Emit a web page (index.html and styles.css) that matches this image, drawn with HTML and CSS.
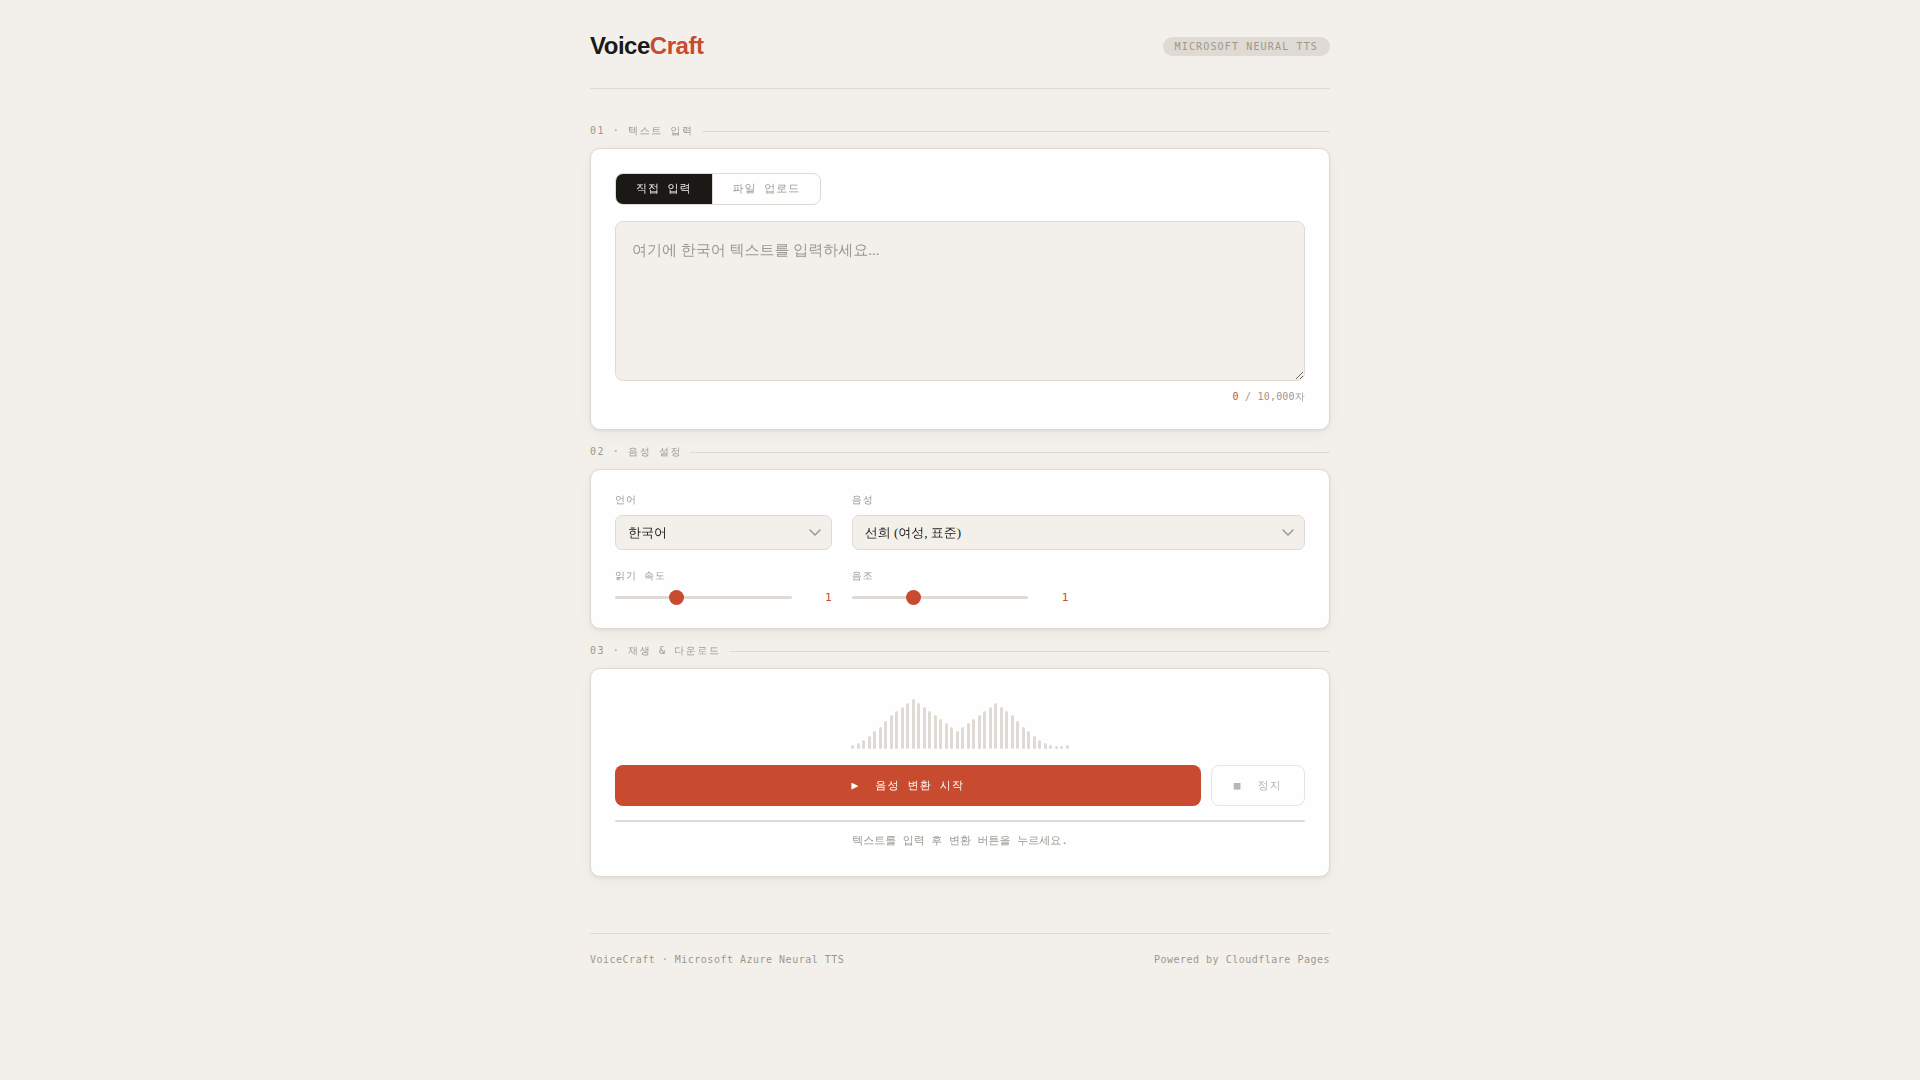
FILE: index.html
```html
<!DOCTYPE html>
<html lang="ko">
<head>
<meta charset="UTF-8">
<meta name="viewport" content="width=device-width, initial-scale=1">
<title>VoiceCraft</title>
<link rel="stylesheet" href="styles.css">
</head>
<body>
<div class="page">
  <header class="header">
    <h1 class="logo">Voice<span class="logo-accent">Craft</span></h1>
    <span class="badge">MICROSOFT NEURAL TTS</span>
  </header>

  <main>
    <h2 class="section-label">01 · 텍스트 입력</h2>
    <section class="card">
      <div class="tabs">
        <button type="button" class="tab tab-active">직접 입력</button>
        <button type="button" class="tab">파일 업로드</button>
      </div>
      <textarea class="text-input" aria-label="텍스트" placeholder="여기에 한국어 텍스트를 입력하세요..."></textarea>
      <p class="counter"><span class="counter-now">0</span> / 10,000자</p>
    </section>

    <h2 class="section-label">02 · 음성 설정</h2>
    <section class="card settings">
      <div class="field">
        <label class="field-label" for="lang">언어</label>
        <div class="select-wrap">
          <select class="select" id="lang"><option>한국어</option></select>
          <svg class="chevron" width="12" height="8" viewBox="0 0 12 8" aria-hidden="true"><path d="M1 1l5 5 5-5"/></svg>
        </div>
      </div>
      <div class="field field-wide">
        <label class="field-label" for="voice">음성</label>
        <div class="select-wrap">
          <select class="select" id="voice"><option>선희 (여성, 표준)</option></select>
          <svg class="chevron" width="12" height="8" viewBox="0 0 12 8" aria-hidden="true"><path d="M1 1l5 5 5-5"/></svg>
        </div>
      </div>
      <div class="field">
        <label class="field-label" for="rate">읽기 속도</label>
        <div class="range-row">
          <input class="range" type="range" id="rate" min="0.5" max="2" step="0.1" value="1">
          <output class="range-value" for="rate">1</output>
        </div>
      </div>
      <div class="field">
        <label class="field-label" for="pitch">음조</label>
        <div class="range-row">
          <input class="range" type="range" id="pitch" min="0.5" max="2" step="0.1" value="1">
          <output class="range-value" for="pitch">1</output>
        </div>
      </div>
    </section>

    <h2 class="section-label">03 · 재생 &amp; 다운로드</h2>
    <section class="card">
      <div class="wave" aria-hidden="true">
        <i style="height:4px"></i><i style="height:6px"></i><i style="height:9px"></i><i style="height:13px"></i><i style="height:18px"></i><i style="height:22px"></i><i style="height:28px"></i><i style="height:34px"></i><i style="height:38px"></i><i style="height:42px"></i>
        <i style="height:46px"></i><i style="height:50px"></i><i style="height:46px"></i><i style="height:42px"></i><i style="height:38px"></i><i style="height:34px"></i><i style="height:30px"></i><i style="height:26px"></i><i style="height:22px"></i><i style="height:18px"></i>
        <i style="height:22px"></i><i style="height:26px"></i><i style="height:30px"></i><i style="height:34px"></i><i style="height:38px"></i><i style="height:42px"></i><i style="height:46px"></i><i style="height:42px"></i><i style="height:38px"></i><i style="height:34px"></i>
        <i style="height:28px"></i><i style="height:22px"></i><i style="height:18px"></i><i style="height:13px"></i><i style="height:9px"></i><i style="height:6px"></i><i style="height:4px"></i><i style="height:3px"></i><i style="height:3px"></i><i style="height:4px"></i>
      </div>
      <div class="actions">
        <button type="button" class="btn btn-primary"><span>▶</span><span>음성 변환 시작</span></button>
        <button type="button" class="btn btn-stop" disabled><span>■</span><span>정지</span></button>
      </div>
      <div class="progress"></div>
      <p class="status">텍스트를 입력 후 변환 버튼을 누르세요.</p>
    </section>
  </main>

  <footer class="footer">
    <span>VoiceCraft · Microsoft Azure Neural TTS</span>
    <span>Powered by Cloudflare Pages</span>
  </footer>
</div>
</body>
</html>
```
FILE: styles.css
```css
:root {
  --bg: #f3f0ec;
  --ink: #1a1916;
  --muted: #9b9890;
  --line: #dfdad3;
  --accent: #c84b2f;
  --mono: "DejaVu Sans Mono", "WenQuanYi Zen Hei", "Noto Sans CJK KR", monospace;
  --serif: "Liberation Serif", "WenQuanYi Zen Hei", "Noto Sans CJK KR", serif;
}

* { box-sizing: border-box; margin: 0; padding: 0; }

body {
  background: var(--bg);
  color: var(--ink);
  font-family: var(--serif);
}

.page {
  max-width: 780px;
  margin: 0 auto;
  padding: 0 20px 60px;
}

.header {
  display: flex;
  align-items: center;
  justify-content: space-between;
  padding: 32px 0 28px;
  margin-bottom: 36px;
  border-bottom: 1px solid var(--line);
}

.logo {
  font: 700 24px/28px "Liberation Sans", sans-serif;
  letter-spacing: -0.02em;
}
.logo-accent { color: var(--accent); }

.badge {
  padding: 3px 12px;
  border-radius: 20px;
  background: var(--line);
  color: var(--muted);
  font: 10px/13px var(--mono);
  letter-spacing: 0.115em;
}

.section-label {
  display: flex;
  align-items: center;
  gap: 8px;
  margin-bottom: 11px;
  color: var(--muted);
  font: 400 10px/12px var(--mono);
  letter-spacing: 0.16em;
}
.section-label::after {
  content: "";
  flex: 1;
  height: 1px;
  background: var(--line);
}

.card {
  padding: 24px;
  margin-bottom: 16px;
  border: 1px solid var(--line);
  border-radius: 10px;
  background: #fefefe;
  box-shadow: 0 1px 3px rgba(26, 26, 22, 0.08), 0 4px 16px rgba(26, 26, 22, 0.04);
}

.tabs {
  display: flex;
  width: fit-content;
  margin-bottom: 16px;
  overflow: hidden;
  border: 1px solid var(--line);
  border-radius: 8px;
}
.tab {
  padding: 7px 20px;
  border: 0;
  background: transparent;
  color: var(--muted);
  font: 11px/16px var(--mono);
  letter-spacing: 0.09em;
}
.tab + .tab { border-left: 1px solid var(--line); }
.tab-active { background: var(--ink); color: var(--bg); }

.text-input {
  display: block;
  width: 100%;
  height: 160px;
  padding: 14px 16px;
  border: 1px solid var(--line);
  border-radius: 8px;
  background: var(--bg);
  color: var(--ink);
  font: 15px/28px var(--serif);
  resize: vertical;
}
.text-input::placeholder { color: var(--muted); }

.counter {
  margin-top: 9px;
  padding-bottom: 1px;
  color: var(--muted);
  font: 10px/14px var(--mono);
  letter-spacing: 0.02em;
  text-align: right;
}
.counter-now { color: var(--accent); }

.settings {
  display: grid;
  grid-template-columns: repeat(3, 1fr);
  gap: 20px;
}
.field { display: flex; flex-direction: column; gap: 9px; }
.field-wide { grid-column: span 2; }
.field-label {
  color: var(--muted);
  font: 10px/12px var(--mono);
  letter-spacing: 0.1em;
}

.select-wrap { display: grid; align-items: center; }
.select-wrap > * { grid-area: 1 / 1; }
.select {
  width: 100%;
  height: 35px;
  padding: 0 36px 0 12px;
  border: 1px solid var(--line);
  border-radius: 7px;
  appearance: none;
  background: var(--bg);
  color: var(--ink);
  font: 13px/20px var(--serif);
}
.chevron {
  justify-self: end;
  margin-right: 11px;
  fill: none;
  stroke: var(--muted);
  stroke-width: 1.5;
  stroke-linecap: round;
  stroke-linejoin: round;
  pointer-events: none;
}

.range-row { display: flex; align-items: center; gap: 12px; }
.range {
  flex: 1;
  min-width: 0;
  height: 3px;
  border-radius: 2px;
  appearance: none;
  background: var(--line);
}
.range::-webkit-slider-thumb {
  width: 15px;
  height: 15px;
  border-radius: 50%;
  appearance: none;
  background: var(--accent);
}
.range-value {
  width: 28px;
  color: var(--accent);
  font: 11px/13px var(--mono);
  text-align: right;
}

.wave {
  display: flex;
  align-items: flex-end;
  justify-content: space-between;
  width: 218px;
  height: 56px;
  margin: 0 auto 16px;
}
.wave i { width: 3px; border-radius: 2px; background: var(--line); }

.actions { display: flex; gap: 10px; }
.btn {
  display: flex;
  align-items: center;
  justify-content: center;
  gap: 16px;
  height: 41px;
  padding: 0 22px;
  border: 1px solid transparent;
  border-radius: 8px;
  font: 11px/16px var(--mono);
  letter-spacing: 0.11em;
}
.btn-primary { flex: 1; background: var(--accent); color: #fff; }
.btn-stop {
  border-color: var(--line);
  background: transparent;
  color: var(--muted);
  opacity: 0.7;
}

.progress {
  height: 2px;
  margin-top: 14px;
  border-radius: 2px;
  background: var(--line);
}
.status {
  margin-top: 11px;
  padding-bottom: 3px;
  color: var(--muted);
  font: 11px/16px var(--mono);
  text-align: center;
}

.footer {
  display: flex;
  justify-content: space-between;
  padding-top: 19px;
  margin-top: 56px;
  border-top: 1px solid var(--line);
  color: var(--muted);
  font: 10px/13px var(--mono);
  letter-spacing: 0.05em;
}
```
